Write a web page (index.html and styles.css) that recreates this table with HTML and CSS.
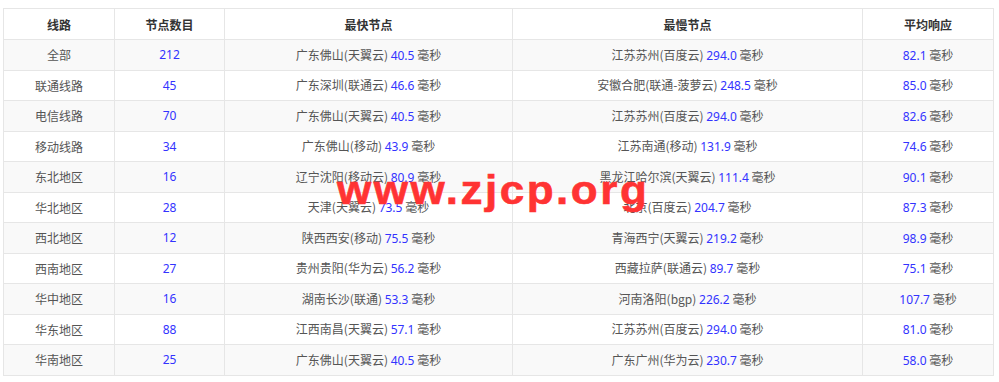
FILE: index.html
```html
<!DOCTYPE html>
<html lang="zh-CN">
<head>
    <meta charset="UTF-8">
    <meta name="viewport" content="width=device-width, initial-scale=1.0">
    <title>线路节点统计</title>
    <link rel="stylesheet" href="styles.css">
</head>
<body>
    <div class="wrap">
        <table class="speed-table">
            <colgroup>
                <col class="col-line">
                <col class="col-count">
                <col class="col-fast">
                <col class="col-slow">
                <col class="col-avg">
            </colgroup>
            <thead>
                <tr>
                    <th>线路</th>
                    <th>节点数目</th>
                    <th>最快节点</th>
                    <th>最慢节点</th>
                    <th>平均响应</th>
                </tr>
            </thead>
            <tbody>
                <tr>
                    <td>全部</td>
                    <td class="num">212</td>
                    <td>广东佛山(天翼云) <span class="num">40.5</span> 毫秒</td>
                    <td>江苏苏州(百度云) <span class="num">294.0</span> 毫秒</td>
                    <td><span class="num">82.1</span> 毫秒</td>
                </tr>
                <tr>
                    <td>联通线路</td>
                    <td class="num">45</td>
                    <td>广东深圳(联通云) <span class="num">46.6</span> 毫秒</td>
                    <td>安徽合肥(联通-菠萝云) <span class="num">248.5</span> 毫秒</td>
                    <td><span class="num">85.0</span> 毫秒</td>
                </tr>
                <tr>
                    <td>电信线路</td>
                    <td class="num">70</td>
                    <td>广东佛山(天翼云) <span class="num">40.5</span> 毫秒</td>
                    <td>江苏苏州(百度云) <span class="num">294.0</span> 毫秒</td>
                    <td><span class="num">82.6</span> 毫秒</td>
                </tr>
                <tr>
                    <td>移动线路</td>
                    <td class="num">34</td>
                    <td>广东佛山(移动) <span class="num">43.9</span> 毫秒</td>
                    <td>江苏南通(移动) <span class="num">131.9</span> 毫秒</td>
                    <td><span class="num">74.6</span> 毫秒</td>
                </tr>
                <tr>
                    <td>东北地区</td>
                    <td class="num">16</td>
                    <td>辽宁沈阳(移动云) <span class="num">80.9</span> 毫秒</td>
                    <td>黑龙江哈尔滨(天翼云) <span class="num">111.4</span> 毫秒</td>
                    <td><span class="num">90.1</span> 毫秒</td>
                </tr>
                <tr>
                    <td>华北地区</td>
                    <td class="num">28</td>
                    <td>天津(天翼云) <span class="num">73.5</span> 毫秒</td>
                    <td>北京(百度云) <span class="num">204.7</span> 毫秒</td>
                    <td><span class="num">87.3</span> 毫秒</td>
                </tr>
                <tr>
                    <td>西北地区</td>
                    <td class="num">12</td>
                    <td>陕西西安(移动) <span class="num">75.5</span> 毫秒</td>
                    <td>青海西宁(天翼云) <span class="num">219.2</span> 毫秒</td>
                    <td><span class="num">98.9</span> 毫秒</td>
                </tr>
                <tr>
                    <td>西南地区</td>
                    <td class="num">27</td>
                    <td>贵州贵阳(华为云) <span class="num">56.2</span> 毫秒</td>
                    <td>西藏拉萨(联通云) <span class="num">89.7</span> 毫秒</td>
                    <td><span class="num">75.1</span> 毫秒</td>
                </tr>
                <tr>
                    <td>华中地区</td>
                    <td class="num">16</td>
                    <td>湖南长沙(联通) <span class="num">53.3</span> 毫秒</td>
                    <td>河南洛阳(bgp) <span class="num">226.2</span> 毫秒</td>
                    <td><span class="num">107.7</span> 毫秒</td>
                </tr>
                <tr>
                    <td>华东地区</td>
                    <td class="num">88</td>
                    <td>江西南昌(天翼云) <span class="num">57.1</span> 毫秒</td>
                    <td>江苏苏州(百度云) <span class="num">294.0</span> 毫秒</td>
                    <td><span class="num">81.0</span> 毫秒</td>
                </tr>
                <tr>
                    <td>华南地区</td>
                    <td class="num">25</td>
                    <td>广东佛山(天翼云) <span class="num">40.5</span> 毫秒</td>
                    <td>广东广州(华为云) <span class="num">230.7</span> 毫秒</td>
                    <td><span class="num">58.0</span> 毫秒</td>
                </tr>
            </tbody>
        </table>
        <div class="watermark">www.zjcp.org</div>
    </div>
</body>
</html>
```

FILE: styles.css
```css
body {
    margin: 0;
    padding: 0;
    background: #ffffff;
    font-family: "Noto Sans CJK SC", "Noto Sans", sans-serif;
    font-size: 12px;
    color: #555555;
}

.wrap {
    position: relative;
    padding: 8px 7px 0 3px;
}

.speed-table {
    width: 990px;
    border-collapse: collapse;
    table-layout: fixed;
    border: 1px solid #e6e6e6;
}

.speed-table th,
.speed-table td {
    border: 1px solid #e6e6e6;
    text-align: center;
    padding: 0;
    white-space: nowrap;
}

.speed-table th {
    height: 30px;
    font-weight: bold;
    color: #333333;
    background: #ffffff;
}

.speed-table td {
    height: 29.5px;
}

.speed-table tbody tr:nth-child(odd) {
    background: #f9f9f9;
}

.col-line { width: 111px; }
.col-count { width: 110px; }
.col-fast { width: 288px; }
.col-slow { width: 350px; }
.col-avg { width: 131px; }

.num {
    color: #3333ff;
    font-family: "Noto Sans", "Open Sans", sans-serif;
}

/* 水印 */
.watermark {
    position: absolute;
    left: 337px;
    top: 170px;
    font-family: "Liberation Sans", Arial, sans-serif;
    font-weight: bold;
    font-size: 40px;
    letter-spacing: 2.3px;
    color: #ff3333;
    -webkit-text-stroke: 0.6px #ff3333;
    line-height: 1;
    transform: scaleX(1.1);
    transform-origin: left top;
}
```
